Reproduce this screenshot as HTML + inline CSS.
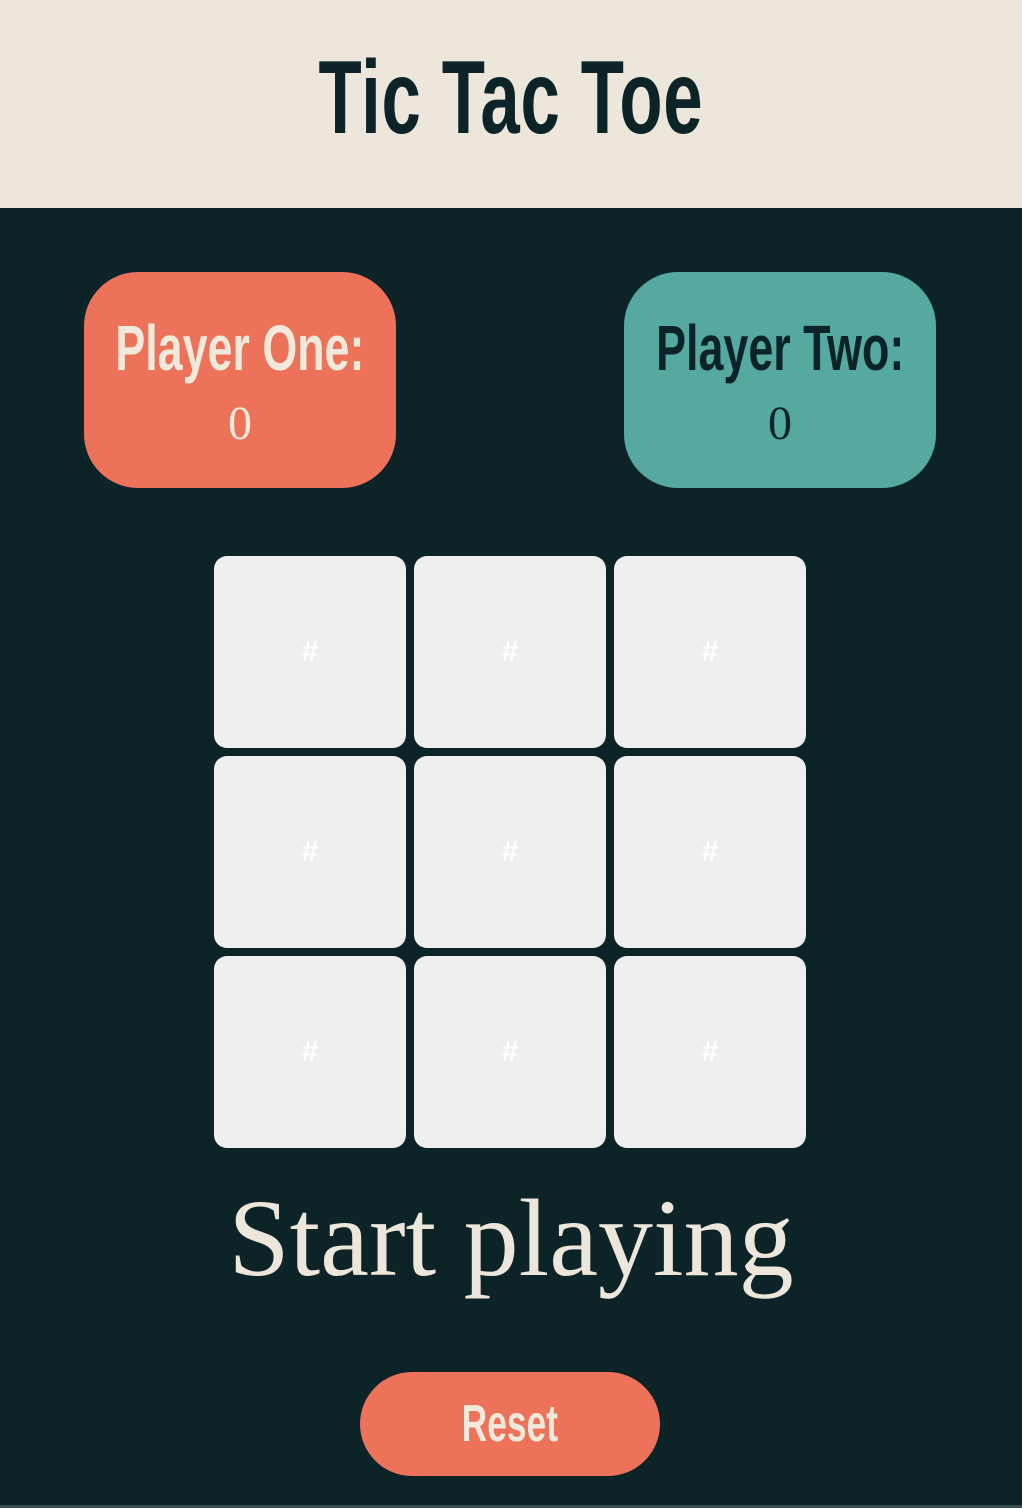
<!DOCTYPE html>
<html><head><meta charset="utf-8"><style>
html,body{margin:0;padding:0;}
body{width:1022px;height:1508px;background:#0c2428;position:relative;overflow:hidden;font-family:"Liberation Sans",sans-serif;}
.hdr{position:absolute;left:0;top:0;width:1022px;height:208px;background:#ede6db;}
.cond{display:inline-block;font-weight:bold;transform:scaleX(0.68);white-space:nowrap;}
.title{position:absolute;left:0;width:1022px;top:38px;text-align:center;font-size:104px;color:#0c2428;line-height:120px;letter-spacing:1px;}
.card{position:absolute;top:272px;width:312px;height:216px;border-radius:54px;text-align:center;}
.name{position:absolute;left:-50px;width:412px;top:36px;font-size:64px;line-height:80px;}
.name .cond{transform:scaleX(0.7);}
.score{position:absolute;left:0;width:312px;top:122px;font-family:"Liberation Serif",serif;font-size:48px;line-height:60px;}
.cell{position:absolute;width:192px;height:192px;background:#efefee;border-radius:13px;color:#fff;font-weight:bold;font-size:30px;line-height:192px;text-align:center;}
.msg{position:absolute;left:0;width:1022px;top:1178px;text-align:center;font-family:"Liberation Serif",serif;font-size:110px;color:#ede6db;line-height:120px;}
.btn{position:absolute;left:360px;top:1372px;width:300px;height:104px;border-radius:52px;background:#ec725a;text-align:center;}
.btn span{font-size:52px;line-height:104px;color:#f1e9dc;}
.line{position:absolute;left:0;top:1505px;width:1022px;height:3px;background:#3a4d50;}
</style></head><body>
<div class="hdr"><div class="title"><span class="cond">Tic Tac Toe</span></div></div>
<div class="card" style="left:84px;background:#ec725a;color:#f1e9dc">
<div class="name"><span class="cond">Player One:</span></div><div class="score">0</div></div>
<div class="card" style="left:624px;background:#55a9a0;color:#0c2428">
<div class="name"><span class="cond">Player Two:</span></div><div class="score">0</div></div>
<div class="cell" style="left:214px;top:556px">#</div>
<div class="cell" style="left:414px;top:556px">#</div>
<div class="cell" style="left:614px;top:556px">#</div>
<div class="cell" style="left:214px;top:756px">#</div>
<div class="cell" style="left:414px;top:756px">#</div>
<div class="cell" style="left:614px;top:756px">#</div>
<div class="cell" style="left:214px;top:956px">#</div>
<div class="cell" style="left:414px;top:956px">#</div>
<div class="cell" style="left:614px;top:956px">#</div>
<div class="msg">Start playing</div>
<div class="btn"><span class="cond">Reset</span></div>
<div class="line"></div>
</body></html>
